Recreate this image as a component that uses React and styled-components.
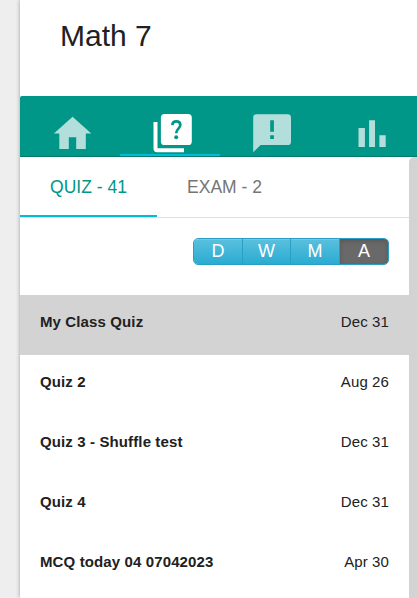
import React, { useState } from "react";
import styled, { createGlobalStyle } from "styled-components";

const quizzes = [
  { title: "My Class Quiz", date: "Dec 31" },
  { title: "Quiz 2", date: "Aug 26" },
  { title: "Quiz 3 - Shuffle test", date: "Dec 31" },
  { title: "Quiz 4", date: "Dec 31" },
  { title: "MCQ today 04 07042023", date: "Apr 30" },
];

const tabs = [
  { label: "QUIZ - 41", width: 137 },
  { label: "EXAM - 2", width: 135 },
];

const ranges = [
  { label: "D", width: 48 },
  { label: "W", width: 48 },
  { label: "M", width: 49 },
  { label: "A", width: 49 },
];

const HomeIcon = () => (
  <svg viewBox="0 0 45 45" fill="currentColor">
    <path d="M22.6 6.8L3.9 23.6h5.4V39h9.5V27.2h7.4V39h9.6V23.6h5.5z" />
  </svg>
);

const QuizIcon = () => (
  <svg viewBox="0 0 45 45" fill="currentColor">
    <path d="M3.5 12h4v26.3H34v4H7.2a3.7 3.7 0 0 1-3.7-3.7z" />
    <path d="M14.5 4h23.7a3.6 3.6 0 0 1 3.6 3.6v23.8a3.6 3.6 0 0 1-3.6 3.6H14.5a3.6 3.6 0 0 1-3.6-3.6V7.6A3.6 3.6 0 0 1 14.5 4z" />
    <path
      d="M22.3 15.1c.2-2.5 1.7-3.7 4-3.7 2.5 0 4 1.3 4 3.5 0 3.8-4.1 3.7-4.1 8.4"
      fill="none"
      stroke="#009688"
      strokeWidth="2.7"
    />
    <circle cx="26.2" cy="27.3" r="2" fill="#009688" />
  </svg>
);

const FeedbackIcon = () => (
  <svg viewBox="0 0 45 45" fill="currentColor">
    <path
      fillRule="evenodd"
      d="M6.6 4.3h31a3.4 3.4 0 0 1 3.4 3.4v24a3.4 3.4 0 0 1-3.4 3.4h-27L3.2 42.2V7.7a3.4 3.4 0 0 1 3.4-3.4zM20.2 10.2v11.5h3.7V10.2zM20.2 25.3v3.8h3.7v-3.8z"
    />
  </svg>
);

const BarsIcon = () => (
  <svg viewBox="0 0 45 45" fill="currentColor">
    <path d="M8.5 18h6.4v19H8.5zM19.1 10.2H25V37h-5.9zM29.4 25.2h6.3V37h-6.3z" />
  </svg>
);

const sections = [
  { name: "home", icon: <HomeIcon /> },
  { name: "quiz", icon: <QuizIcon /> },
  { name: "feedback", icon: <FeedbackIcon /> },
  { name: "stats", icon: <BarsIcon /> },
];

function App() {
  const [section, setSection] = useState("quiz");
  const [tab, setTab] = useState("QUIZ - 41");
  const [range, setRange] = useState("A");
  const [selected, setSelected] = useState(0);

  return (
    <Page>
      <GlobalStyle />
      <Card>
        <Title>Math 7</Title>
        <NavBar>
          {sections.map(({ name, icon }) => (
            <NavItem
              key={name}
              aria-label={name}
              $active={section === name}
              onClick={() => setSection(name)}
            >
              {icon}
            </NavItem>
          ))}
        </NavBar>
        <Body>
          <Content>
            <Tabs>
              {tabs.map(({ label, width }) => (
                <Tab
                  key={label}
                  $width={width}
                  $active={tab === label}
                  onClick={() => setTab(label)}
                >
                  {label}
                </Tab>
              ))}
            </Tabs>
            <RangeRow>
              <RangeGroup>
                {ranges.map(({ label, width }) => (
                  <RangeBtn
                    key={label}
                    $width={width}
                    $active={range === label}
                    onClick={() => setRange(label)}
                  >
                    {label}
                  </RangeBtn>
                ))}
              </RangeGroup>
            </RangeRow>
            {quizzes.map((quiz, i) => (
              <Row
                key={quiz.title}
                $active={selected === i}
                onClick={() => setSelected(i)}
              >
                <RowTitle>{quiz.title}</RowTitle>
                <RowDate>{quiz.date}</RowDate>
              </Row>
            ))}
          </Content>
          <ScrollThumb />
        </Body>
      </Card>
    </Page>
  );
}

const GlobalStyle = createGlobalStyle`
  * {
    box-sizing: border-box;
  }

  body {
    margin: 0;
    overflow: hidden;
    background: #eeeeee;
    color: #212121;
    font-family: "Liberation Sans", Arial, sans-serif;
  }

  button {
    border: 0;
    padding: 0;
    background: none;
    font-family: inherit;
    cursor: pointer;
  }
`;

const Page = styled.div`
  height: 598px;
  padding-left: 20px;
  overflow: hidden;
`;

const Card = styled.div`
  display: flex;
  flex-direction: column;
  height: 100%;
  background: #fff;
  box-shadow: 0 0 4px rgba(0, 0, 0, 0.35);
`;

const Title = styled.h1`
  height: 96px;
  margin: 0;
  padding: 18px 40px 0;
  font-size: 30px;
  font-weight: 400;
  line-height: 36px;
`;

const NavBar = styled.nav`
  display: flex;
  flex: none;
  height: 61px;
  border-bottom: 1px solid #00796f;
  border-top-left-radius: 2px;
  background: #009688;
`;

const NavItem = styled.button`
  display: flex;
  flex: none;
  align-items: flex-start;
  width: 100px;
  padding: 14px 0 0 30px;
  border-bottom: 2px solid ${(props) => (props.$active ? "#00bcd4" : "transparent")};
  color: ${(props) => (props.$active ? "#fff" : "#b2dfdb")};

  svg {
    flex: none;
    width: 45px;
    height: 45px;
  }
`;

const Body = styled.div`
  display: flex;
  flex: 1;
`;

const Content = styled.div`
  flex: 1;
`;

const Tabs = styled.div`
  display: flex;
  height: 61px;
  border-bottom: 1px solid #e0e0e0;
`;

const Tab = styled.button`
  width: ${(props) => props.$width}px;
  padding-top: 2px;
  border-bottom: 2px solid ${(props) => (props.$active ? "#00bcd4" : "transparent")};
  color: ${(props) => (props.$active ? "#009688" : "#757575")};
  font-size: 17.5px;
`;

const RangeRow = styled.div`
  display: flex;
  justify-content: flex-end;
  height: 77px;
  padding: 20px 20px 0 0;
`;

const RangeGroup = styled.div`
  display: flex;
  width: 196px;
  height: 27px;
  border: 1px solid #2a9fc4;
  border-radius: 5px;
  overflow: hidden;
`;

const RangeBtn = styled.button`
  width: ${(props) => props.$width}px;
  border-left: 1px solid #2a9fc4;
  background: ${(props) =>
    props.$active ? "#696969" : "linear-gradient(#5bc0de, #2aabd2)"};
  box-shadow: ${(props) =>
    props.$active
      ? "inset 0 2px 5px rgba(0, 0, 0, 0.18)"
      : "inset 0 1px 0 rgba(255, 255, 255, 0.15)"};
  color: #fff;
  font-size: 18px;
  line-height: 25px;

  &:first-child {
    border-left: 0;
  }
`;

const Row = styled.div`
  display: flex;
  justify-content: space-between;
  height: 60px;
  padding: 17px 20px 0;
  background: ${(props) => (props.$active ? "#d3d3d3" : "#fff")};
  font-size: 15px;
  line-height: 20px;
  cursor: pointer;
`;

const RowTitle = styled.span`
  font-weight: 700;
  letter-spacing: 0.12px;
`;

const RowDate = styled.span`
  letter-spacing: 0.1px;
`;

const ScrollThumb = styled.div`
  width: 8px;
  border-top-left-radius: 5px;
  background: #d3d3d3;
`;

export default App;
